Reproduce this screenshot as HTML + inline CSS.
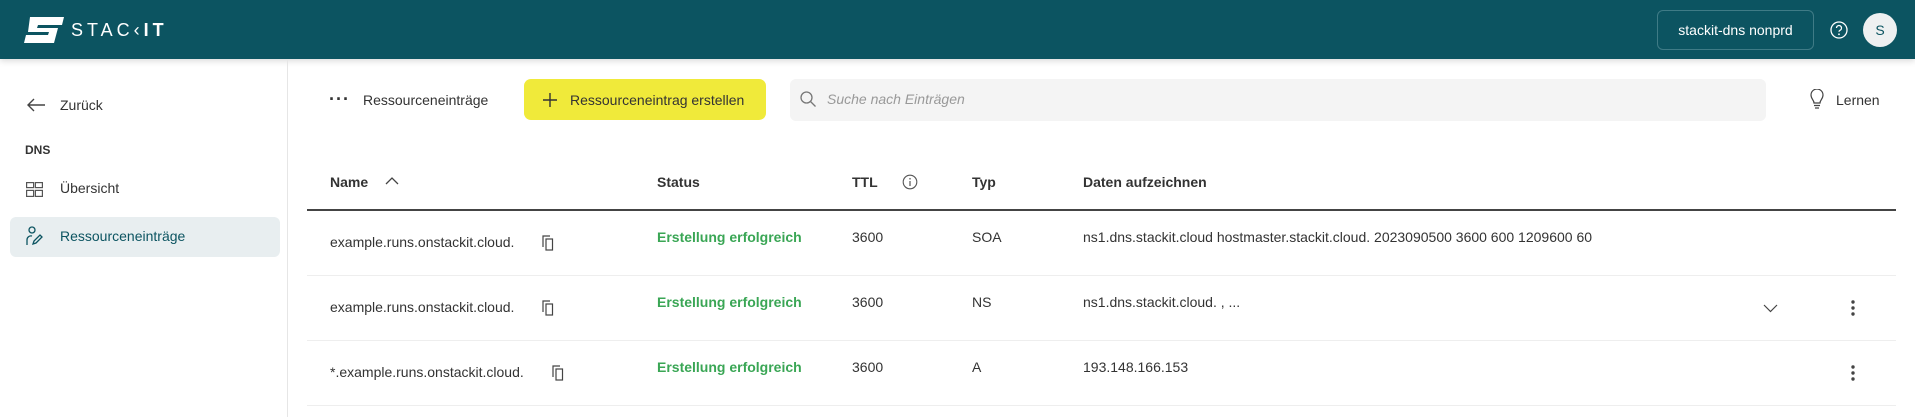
<!DOCTYPE html>
<html><head><meta charset="utf-8"><style>
*{box-sizing:border-box;margin:0;padding:0}
body{width:1915px;height:417px;overflow:hidden;background:#fff;font-family:"Liberation Sans",sans-serif;color:#333;font-size:14px;position:relative}
.a{position:absolute;white-space:nowrap}
.hdr{left:0;top:0;width:1915px;height:59px;background:#0c5461;box-shadow:0 2px 6px rgba(0,0,0,.15)}
.side{left:0;top:59px;width:288px;height:358px;border-right:1px solid #e6e6e6}
.g{color:#3aa655;font-weight:bold}
.th{font-weight:bold;color:#333;top:174px}
.line{left:307px;width:1589px;height:1px;background:#eee}
</style></head><body>
<div class="a hdr"></div>
<svg class="a" style="left:24px;top:17px" width="40" height="26" viewBox="0 0 40 26"><path d="M6 0H40L38 8H14L13 11H34L30 26H0L2 18H24L25 15H4Z" fill="#fff"/></svg>
<div class="a" style="left:71px;top:20px;color:#fff;font-size:18px;letter-spacing:4px">STAC<span style="font-weight:300">&lsaquo;</span><b>IT</b></div>
<div class="a" style="left:1657px;top:10px;width:157px;height:40px;border:1px solid #3f7b86;border-radius:6px;color:#fff;text-align:center;line-height:38px;font-size:14px">stackit-dns nonprd</div>
<svg class="a" style="left:1830px;top:21px" width="18" height="18" viewBox="0 0 18 18"><circle cx="9" cy="9" r="8" fill="none" stroke="#fff" stroke-width="1.3"/><path d="M6.5 7a2.5 2.5 0 1 1 3.5 2.3c-.7.3-1 .8-1 1.5" fill="none" stroke="#fff" stroke-width="1.3"/><circle cx="9" cy="13.3" r=".9" fill="#fff"/></svg>
<div class="a" style="left:1863px;top:13px;width:34px;height:34px;border-radius:50%;background:#eef0f1;color:#0c5461;text-align:center;line-height:34px;font-size:14px">S</div>
<div class="a side"></div>
<svg class="a" style="left:26px;top:98px" width="20" height="14" viewBox="0 0 20 14"><path d="M19 7H2M8 1L2 7l6 6" fill="none" stroke="#444" stroke-width="1.4"/></svg>
<div class="a" style="left:60px;top:97px">Zurück</div>
<div class="a" style="left:25px;top:143px;font-size:12px;font-weight:bold">DNS</div>
<svg class="a" style="left:26px;top:182px" width="17" height="15" viewBox="0 0 17 15"><g fill="none" stroke="#555" stroke-width="1.2"><rect x=".6" y=".6" width="7" height="5"/><rect x="9.4" y=".6" width="7" height="5"/><rect x=".6" y="8.4" width="7" height="6"/><rect x="9.4" y="8.4" width="7" height="6"/></g></svg>
<div class="a" style="left:60px;top:180px">Übersicht</div>
<div class="a" style="left:10px;top:217px;width:270px;height:40px;background:#e8eef0;border-radius:6px"></div>
<svg class="a" style="left:26px;top:226px" width="18" height="20" viewBox="0 0 18 20"><g fill="none" stroke="#0c5461" stroke-width="1.3"><circle cx="6" cy="4" r="3"/><path d="M1 19v-5a4 4 0 0 1 5-4M7 18l1-3 6-6 2 2-6 6z"/></g></svg>
<div class="a" style="left:60px;top:228px;color:#0c5461">Ressourceneinträge</div>
<div class="a" style="left:329px;top:89px;font-size:18px;letter-spacing:1px;font-weight:bold">···</div>
<div class="a" style="left:363px;top:92px">Ressourceneinträge</div>
<div class="a" style="left:524px;top:79px;width:242px;height:41px;background:#f0ea3a;border-radius:7px"></div>
<svg class="a" style="left:542px;top:92px" width="16" height="16"><path d="M8 1v14M1 8h14" stroke="#333" stroke-width="1.4"/></svg>
<div class="a" style="left:570px;top:92px">Ressourceneintrag erstellen</div>
<div class="a" style="left:790px;top:79px;width:976px;height:42px;background:#f4f4f4;border-radius:6px"></div>
<svg class="a" style="left:799px;top:90px" width="18" height="18" viewBox="0 0 18 18"><circle cx="7.5" cy="7.5" r="5.5" fill="none" stroke="#777" stroke-width="1.3"/><path d="M11.5 11.5l5 5" stroke="#777" stroke-width="1.3"/></svg>
<div class="a" style="left:827px;top:91px;color:#999;font-style:italic">Suche nach Einträgen</div>
<svg class="a" style="left:1810px;top:89px" width="14" height="20" viewBox="0 0 14 20"><g fill="none" stroke="#444" stroke-width="1.2"><path d="M4 14c0-3-3-4-3-8a6 6 0 0 1 12 0c0 4-3 5-3 8z"/><path d="M4 16.5h6M5 19h4"/></g></svg>
<div class="a" style="left:1836px;top:92px">Lernen</div>
<div class="a th" style="left:330px">Name</div>
<svg class="a" style="left:385px;top:176px" width="14" height="10"><path d="M1 8l6-6 6 6" fill="none" stroke="#444" stroke-width="1.3"/></svg>
<div class="a th" style="left:657px">Status</div>
<div class="a th" style="left:852px">TTL</div>
<svg class="a" style="left:902px;top:174px" width="16" height="16"><circle cx="8" cy="8" r="6.8" fill="none" stroke="#555" stroke-width="1.1"/><path d="M8 7v5" stroke="#555" stroke-width="1.2"/><circle cx="8" cy="4.8" r=".8" fill="#555"/></svg>
<div class="a th" style="left:972px">Typ</div>
<div class="a th" style="left:1083px">Daten aufzeichnen</div>
<div class="a" style="left:307px;top:209px;width:1589px;height:2px;background:#444"></div>
<div class="a line" style="top:275px"></div>
<div class="a line" style="top:340px"></div>
<div class="a line" style="top:405px"></div>

<div class="a" style="left:330px;top:234px">example.runs.onstackit.cloud.</div>
<div class="a g" style="left:657px;top:229px">Erstellung erfolgreich</div>
<div class="a" style="left:852px;top:229px">3600</div>
<div class="a" style="left:972px;top:229px">SOA</div>
<div class="a" style="left:1083px;top:229px">ns1.dns.stackit.cloud hostmaster.stackit.cloud. 2023090500 3600 600 1209600 60</div>

<div class="a" style="left:330px;top:299px">example.runs.onstackit.cloud.</div>
<div class="a g" style="left:657px;top:294px">Erstellung erfolgreich</div>
<div class="a" style="left:852px;top:294px">3600</div>
<div class="a" style="left:972px;top:294px">NS</div>
<div class="a" style="left:1083px;top:294px">ns1.dns.stackit.cloud. , ...</div>

<div class="a" style="left:330px;top:364px">*.example.runs.onstackit.cloud.</div>
<div class="a g" style="left:657px;top:359px">Erstellung erfolgreich</div>
<div class="a" style="left:852px;top:359px">3600</div>
<div class="a" style="left:972px;top:359px">A</div>
<div class="a" style="left:1083px;top:359px">193.148.166.153</div>

<svg class="a" style="left:542px;top:235px" width="12" height="16" viewBox="0 0 12 16"><g fill="none" stroke="#444" stroke-width="1.2"><path d="M1 12V1h7"/><rect x="4" y="4" width="6.5" height="11"/></g></svg>
<svg class="a" style="left:542px;top:300px" width="12" height="16" viewBox="0 0 12 16"><g fill="none" stroke="#444" stroke-width="1.2"><path d="M1 12V1h7"/><rect x="4" y="4" width="6.5" height="11"/></g></svg>
<svg class="a" style="left:552px;top:365px" width="12" height="16" viewBox="0 0 12 16"><g fill="none" stroke="#444" stroke-width="1.2"><path d="M1 12V1h7"/><rect x="4" y="4" width="6.5" height="11"/></g></svg>

<svg class="a" style="left:1763px;top:304px" width="15" height="9"><path d="M1 1l6.5 6.5L14 1" fill="none" stroke="#444" stroke-width="1.2"/></svg>
<svg class="a" style="left:1850px;top:299px" width="6" height="18"><circle cx="3" cy="3" r="1.7" fill="#444"/><circle cx="3" cy="9" r="1.7" fill="#444"/><circle cx="3" cy="15" r="1.7" fill="#444"/></svg>
<svg class="a" style="left:1850px;top:364px" width="6" height="18"><circle cx="3" cy="3" r="1.7" fill="#444"/><circle cx="3" cy="9" r="1.7" fill="#444"/><circle cx="3" cy="15" r="1.7" fill="#444"/></svg>
</body></html>
